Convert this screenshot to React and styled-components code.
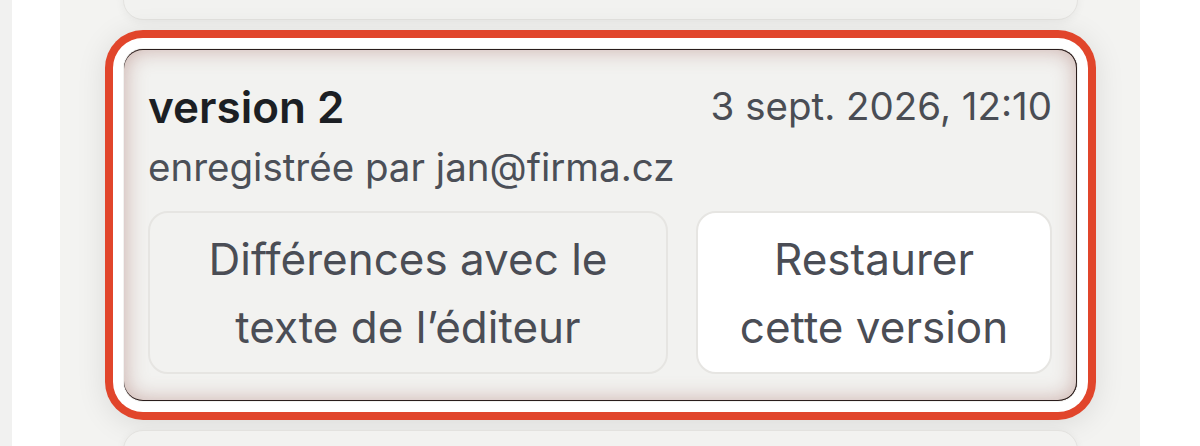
import styled, { createGlobalStyle } from 'styled-components'

const GlobalStyle = createGlobalStyle`
  html, body {
    margin: 0;
    padding: 0;
    background: #ffffff;
    font-family: Inter, "Noto Sans", "Liberation Sans", sans-serif;
  }
`

const versions = [
  { id: 3, name: 'version 3', date: '3 sept. 2026, 12:40', author: 'jan@firma.cz' },
  { id: 2, name: 'version 2', date: '3 sept. 2026, 12:10', author: 'jan@firma.cz', selected: true },
  { id: 1, name: 'version 1', date: '3 sept. 2026, 11:52', author: 'jan@firma.cz' },
]

const App = () => {
  return (
    <>
      <GlobalStyle />
      <Page>
        <EdgeStrip />
        <Gutter />
        <Panel>
          <List>
            {versions.map((v) => (
              <Card key={v.id} $selected={v.selected}>
                <CardHead>
                  <Title>{v.name}</Title>
                  <Stamp>{v.date}</Stamp>
                </CardHead>
                <Author>enregistrée par {v.author}</Author>
                <Actions>
                  <ActionButton>Différences avec le texte de l’éditeur</ActionButton>
                  <ActionButton $primary>Restaurer cette version</ActionButton>
                </Actions>
              </Card>
            ))}
          </List>
        </Panel>
        <Gutter />
      </Page>
    </>
  )
}

const Page = styled.div`
  display: flex;
  height: 446px;
  overflow: hidden;
  background: #ffffff;
`

const EdgeStrip = styled.div`
  width: 12px;
  flex: none;
  background: #f1f1f0;
`

const Gutter = styled.div`
  width: 48px;
  flex: none;
  background: #ffffff;
`

const Panel = styled.div`
  width: 1080px;
  flex: none;
  background: #f3f3f1;
  padding: 0 62px 0 63px;
  box-sizing: border-box;
`

const List = styled.div`
  display: flex;
  flex-direction: column;
  gap: 28px;
  margin-top: -334px;
`

const Card = styled.div`
  display: flex;
  flex-direction: column;
  flex: none;
  padding: 32px 25px 27px 24px;
  border-radius: 20px;
  background: #f2f2f0;
  border: 1px solid ${(p) => (p.$selected ? 'transparent' : '#e3e2df')};
  box-shadow: ${(p) =>
    p.$selected
      ? `inset -1px 0 0 #2a1d1c, inset 0 1px 0 #2a1d1c, inset 0 -1px 0 #2a1d1c,
         inset 0 0 22px rgba(150, 85, 75, 0.45),
         0 0 0 10px #ffffff, 0 0 0 18px #e1452b, 0 4px 30px 18px rgba(0, 0, 0, 0.1)`
      : '0 2px 10px rgba(0, 0, 0, 0.05)'};
`

const CardHead = styled.div`
  display: flex;
  justify-content: space-between;
  align-items: flex-start;
`

const Title = styled.div`
  font-size: 44px;
  line-height: 52px;
  font-weight: 600;
  color: #1c1f24;
`

const Stamp = styled.div`
  font-size: 38.5px;
  line-height: 50px;
  color: #4a4d54;
`

const Author = styled.div`
  font-size: 38.5px;
  line-height: 48px;
  color: #4b4f57;
  margin-top: 10px;
`

const Actions = styled.div`
  display: grid;
  grid-template-columns: 520fr 356fr;
  gap: 28px;
  margin-top: 20px;
`

const ActionButton = styled.button`
  height: 163px;
  padding: 0 30px;
  border-radius: 20px;
  border: 2px solid #e6e5e2;
  background: ${(p) => (p.$primary ? '#ffffff' : '#f2f2f0')};
  color: #4a4d55;
  font-family: inherit;
  font-size: 44px;
  line-height: 68px;
  text-align: center;
  cursor: pointer;
`

export default App
